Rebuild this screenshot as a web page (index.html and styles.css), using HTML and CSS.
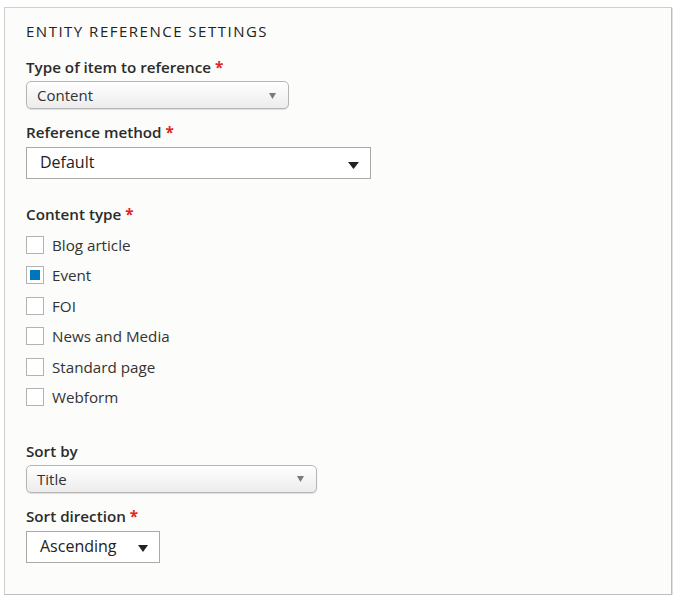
FILE: index.html
```html
<!DOCTYPE html>
<html lang="en">
<head>
<meta charset="utf-8">
<title>Entity reference settings</title>
<link rel="stylesheet" href="styles.css">
</head>
<body>
<div class="fieldset">
  <div class="legend">Entity reference settings</div>

  <div class="label l-first">Type of item to reference <span class="req">*</span></div>
  <div class="select seven w1">
    <span class="value">Content</span>
    <svg class="arrow-s" width="7" height="6" viewBox="0 0 7 6"><path d="M0 0H7L3.5 6Z" fill="#7a7a7a"/></svg>
  </div>

  <div class="label l-next">Reference method <span class="req">*</span></div>
  <div class="select plain w2">
    <span class="value">Default</span>
    <svg class="arrow-b" width="11" height="7" viewBox="0 0 11 7"><path d="M0 0H11L5.5 7Z" fill="#222"/></svg>
  </div>

  <div class="label l-group">Content type <span class="req">*</span></div>
  <div class="checks">
    <div class="check"><span class="box"></span><span>Blog article</span></div>
    <div class="check"><span class="box checked"></span><span>Event</span></div>
    <div class="check"><span class="box"></span><span>FOI</span></div>
    <div class="check"><span class="box"></span><span>News and Media</span></div>
    <div class="check"><span class="box"></span><span>Standard page</span></div>
    <div class="check"><span class="box"></span><span>Webform</span></div>
  </div>

  <div class="label l-sort">Sort by</div>
  <div class="select seven w3">
    <span class="value">Title</span>
    <svg class="arrow-s" width="7" height="6" viewBox="0 0 7 6"><path d="M0 0H7L3.5 6Z" fill="#7a7a7a"/></svg>
  </div>

  <div class="label l-next">Sort direction <span class="req">*</span></div>
  <div class="select plain w4">
    <span class="value">Ascending</span>
    <svg class="arrow-b" width="10" height="7" viewBox="0 0 10 7"><path d="M0 0H10L5 7Z" fill="#222"/></svg>
  </div>
</div>
</body>
</html>
```

FILE: styles.css
```css
html, body {
  margin: 0;
  padding: 0;
  background: #ffffff;
}
body {
  font-family: "Open Sans", "DejaVu Sans", sans-serif;
  color: #333;
}
.fieldset {
  margin: 7px 0 0 4px;
  width: 668px;
  box-sizing: border-box;
  border: 1px solid #cfcfcf;
  border-right-color: #bdbdbd;
  border-bottom-color: #bdbdbd;
  box-shadow: 1px 1px 0 #e2e2e2;
  background: #fcfcfa;
  padding: 13px 21px 31px 21px;
}
.legend {
  font-size: 15px;
  line-height: 20px;
  text-transform: uppercase;
  letter-spacing: 1.5px;
  color: #222;
}
.label {
  font-size: 15.2px;
  line-height: 20px;
  font-weight: 600;
  color: #2b2b2b;
}
.req {
  color: #e1261c;
  font-weight: 700;
}
.l-first { margin: 16px 0 4px; }
.l-next { margin: 13px 0 5px; }
.l-group { margin: 25px 0 12px; }
.l-sort { margin: 35px 0 4px; }
.select {
  box-sizing: border-box;
  display: flex;
  align-items: center;
  justify-content: space-between;
  color: #333;
}
.seven {
  height: 28px;
  border: 1px solid #b5b5b5;
  border-radius: 5px;
  background: linear-gradient(#ffffff, #ececec);
  box-shadow: 0 1px 1px rgba(0,0,0,0.12);
  padding: 0 12px 0 10px;
  font-size: 15px;
}
.plain {
  height: 32px;
  border: 1px solid #a9a9a9;
  background: #ffffff;
  padding: 0 11px 0 13px;
  font-size: 16px;
  color: #222;
}
.plain .value { margin-top: -2px; }
.arrow-s { display: block; margin-top: 1px; }
.arrow-b { display: block; margin-top: 4px; }
.w1 { width: 263px; }
.w2 { width: 345px; }
.w3 { width: 291px; }
.w4 { width: 134px; }
.checks {
  display: flex;
  flex-direction: column;
  gap: 12.4px;
}
.check {
  display: flex;
  align-items: center;
  height: 18px;
  font-size: 15.2px;
  line-height: 18px;
  color: #333;
}
.box {
  box-sizing: border-box;
  width: 18px;
  height: 18px;
  border: 1px solid #b3b3b3;
  background: #fff;
  margin-right: 8px;
  flex: none;
  display: flex;
  align-items: center;
  justify-content: center;
}
.box.checked::after {
  content: "";
  width: 10px;
  height: 10px;
  background: #0074bd;
}
```
